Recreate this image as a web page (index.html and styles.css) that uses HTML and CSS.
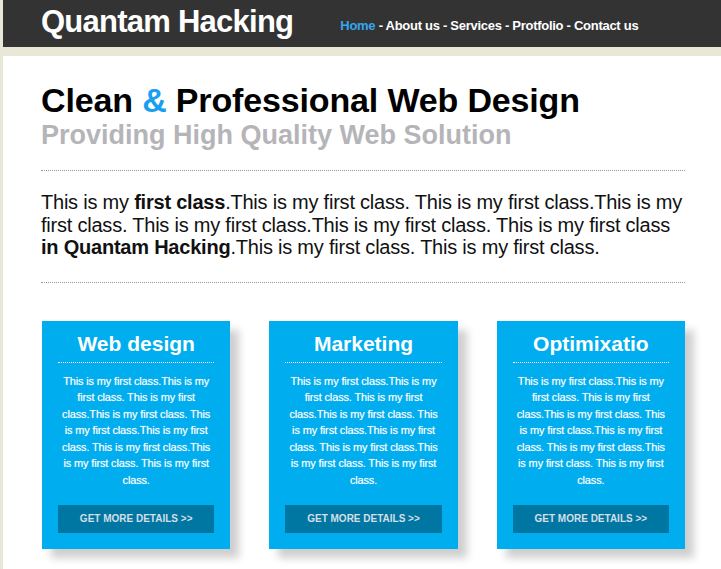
FILE: index.html
```html
<!DOCTYPE html>
<html>
<head>
<meta charset="utf-8">
<link rel="stylesheet" href="styles.css">
</head>
<body>
<header class="topbar">
  <div class="brand">Quantam Hacking</div>
  <nav class="nav">
    <a class="nav-link active">Home</a> - <a class="nav-link">About us</a> - <a class="nav-link">Services</a> - <a class="nav-link">Protfolio</a> - <a class="nav-link">Contact us</a>
  </nav>
</header>
<main class="content">
  <section class="hero">
    <h1 class="hero-title">Clean <span class="amp">&amp;</span> Professional Web Design</h1>
    <h2 class="hero-sub">Providing High Quality Web Solution</h2>
  </section>
  <p class="intro">This is my <b>first class</b>.This is my first class. This is my first class.This is my first class. This is my first class.This is my first class. This is my first class <b>in Quantam Hacking</b>.This is my first class. This is my first class.</p>
  <section class="cards">
    <div class="card">
      <h3 class="card-title">Web design</h3>
      <p class="card-text">This is my first class.This is my first class. This is my first class.This is my first class. This is my first class.This is my first class. This is my first class.This is my first class. This is my first class.</p>
      <a class="card-btn">GET MORE DETAILS &gt;&gt;</a>
    </div>
    <div class="card">
      <h3 class="card-title">Marketing</h3>
      <p class="card-text">This is my first class.This is my first class. This is my first class.This is my first class. This is my first class.This is my first class. This is my first class.This is my first class. This is my first class.</p>
      <a class="card-btn">GET MORE DETAILS &gt;&gt;</a>
    </div>
    <div class="card">
      <h3 class="card-title">Optimixatio</h3>
      <p class="card-text">This is my first class.This is my first class. This is my first class.This is my first class. This is my first class.This is my first class. This is my first class.This is my first class. This is my first class.</p>
      <a class="card-btn">GET MORE DETAILS &gt;&gt;</a>
    </div>
  </section>
</main>
</body>
</html>
```
FILE: styles.css
```css
html, body {
  margin: 0;
  padding: 0;
}
body {
  background: #e9e7d5;
  font-family: "Liberation Sans", Arial, sans-serif;
  padding-left: 3px;
  overflow: hidden;
}
.topbar {
  background: #333333;
  height: 47px;
  display: flex;
  align-items: center;
  padding-left: 38px;
}
.brand {
  color: #ffffff;
  font-weight: bold;
  font-size: 31px;
  letter-spacing: -0.75px;
  margin-top: -3px;
}
.nav {
  margin-left: 47px;
  margin-top: 3px;
  color: #ffffff;
  font-weight: bold;
  font-size: 13px;
  letter-spacing: -0.28px;
}
.nav-link {
  color: #ffffff;
}
.nav-link.active {
  color: #33a6f0;
}
.content {
  background: #ffffff;
  margin-top: 9px;
  padding: 25px 36px 0 38px;
  height: 600px;
}
.hero {
  border-bottom: 1px dotted #9a9a9a;
  padding-bottom: 20px;
}
.hero-title {
  margin: 0;
  font-size: 34px;
  line-height: 38px;
  letter-spacing: -0.15px;
  color: #000;
}
.amp {
  color: #1a9ff0;
}
.hero-sub {
  margin: 1px 0 0;
  font-size: 27px;
  line-height: 30px;
  color: #b5b5b9;
  letter-spacing: 0;
}
.intro {
  margin: 0;
  padding: 20px 0 23px;
  font-size: 20px;
  line-height: 22.5px;
  letter-spacing: -0.22px;
  border-bottom: 1px dotted #9a9a9a;
  color: #111;
}
.cards {
  display: flex;
  gap: 39px;
  margin-top: 38px;
  padding-left: 1px;
}
.card {
  width: 189px;
  background: #00adee;
  box-shadow: 9px 9px 8px #cfcfcf;
  padding: 10px 16px 16px;
  box-sizing: border-box;
  display: flex;
  flex-direction: column;
  align-items: stretch;
}
.card-title {
  margin: 0;
  color: #fff;
  font-size: 21px;
  text-align: center;
  padding-bottom: 5px;
  border-bottom: 1px dotted #ffffff;
  line-height: 26px;
}
.card-text {
  margin: 10px 0 0;
  color: #fff;
  font-size: 11px;
  line-height: 16.6px;
  text-align: center;
  text-shadow: 0 0 1px rgba(255,255,255,0.5);
  letter-spacing: -0.15px;
}
.card-btn {
  display: block;
  margin-top: 16px;
  background: #0076a3;
  color: #d4dfe6;
  font-size: 10px;
  font-weight: bold;
  text-align: center;
  height: 28px;
  line-height: 28px;
}
```
